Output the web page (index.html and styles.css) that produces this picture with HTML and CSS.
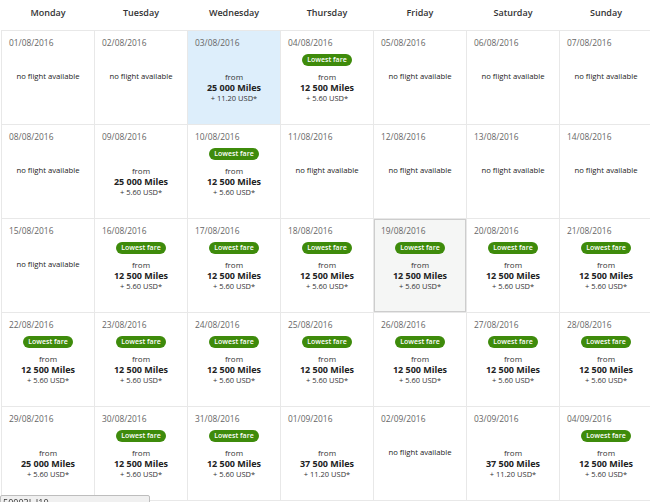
FILE: index.html
```html
<!DOCTYPE html>
<html>
<head>
<meta charset="utf-8">
<link rel="stylesheet" href="styles.css">
</head>
<body>
<div class="cal">
  <div class="days">
    <div class="day">Monday</div><div class="day">Tuesday</div><div class="day">Wednesday</div><div class="day">Thursday</div><div class="day">Friday</div><div class="day">Saturday</div><div class="day">Sunday</div>
  </div>
  <div class="grid">
    <!-- row 1 -->
    <div class="cell"><div class="date">01/08/2016</div><div class="badge-slot"></div><div class="none">no flight available</div></div>
    <div class="cell"><div class="date">02/08/2016</div><div class="badge-slot"></div><div class="none">no flight available</div></div>
    <div class="cell selected"><div class="date">03/08/2016</div><div class="badge-slot"></div><div class="from">from</div><div class="miles">25 000 Miles</div><div class="usd">+ 11.20 USD*</div></div>
    <div class="cell"><div class="date">04/08/2016</div><div class="badge-slot"><span class="badge">Lowest fare</span></div><div class="from">from</div><div class="miles">12 500 Miles</div><div class="usd">+ 5.60 USD*</div></div>
    <div class="cell"><div class="date">05/08/2016</div><div class="badge-slot"></div><div class="none">no flight available</div></div>
    <div class="cell"><div class="date">06/08/2016</div><div class="badge-slot"></div><div class="none">no flight available</div></div>
    <div class="cell"><div class="date">07/08/2016</div><div class="badge-slot"></div><div class="none">no flight available</div></div>
    <!-- row 2 -->
    <div class="cell"><div class="date">08/08/2016</div><div class="badge-slot"></div><div class="none">no flight available</div></div>
    <div class="cell"><div class="date">09/08/2016</div><div class="badge-slot"></div><div class="from">from</div><div class="miles">25 000 Miles</div><div class="usd">+ 5.60 USD*</div></div>
    <div class="cell"><div class="date">10/08/2016</div><div class="badge-slot"><span class="badge">Lowest fare</span></div><div class="from">from</div><div class="miles">12 500 Miles</div><div class="usd">+ 5.60 USD*</div></div>
    <div class="cell"><div class="date">11/08/2016</div><div class="badge-slot"></div><div class="none">no flight available</div></div>
    <div class="cell"><div class="date">12/08/2016</div><div class="badge-slot"></div><div class="none">no flight available</div></div>
    <div class="cell"><div class="date">13/08/2016</div><div class="badge-slot"></div><div class="none">no flight available</div></div>
    <div class="cell"><div class="date">14/08/2016</div><div class="badge-slot"></div><div class="none">no flight available</div></div>
    <!-- row 3 -->
    <div class="cell"><div class="date">15/08/2016</div><div class="badge-slot"></div><div class="none">no flight available</div></div>
    <div class="cell"><div class="date">16/08/2016</div><div class="badge-slot"><span class="badge">Lowest fare</span></div><div class="from">from</div><div class="miles">12 500 Miles</div><div class="usd">+ 5.60 USD*</div></div>
    <div class="cell"><div class="date">17/08/2016</div><div class="badge-slot"><span class="badge">Lowest fare</span></div><div class="from">from</div><div class="miles">12 500 Miles</div><div class="usd">+ 5.60 USD*</div></div>
    <div class="cell"><div class="date">18/08/2016</div><div class="badge-slot"><span class="badge">Lowest fare</span></div><div class="from">from</div><div class="miles">12 500 Miles</div><div class="usd">+ 5.60 USD*</div></div>
    <div class="cell hover"><div class="date">19/08/2016</div><div class="badge-slot"><span class="badge">Lowest fare</span></div><div class="from">from</div><div class="miles">12 500 Miles</div><div class="usd">+ 5.60 USD*</div></div>
    <div class="cell"><div class="date">20/08/2016</div><div class="badge-slot"><span class="badge">Lowest fare</span></div><div class="from">from</div><div class="miles">12 500 Miles</div><div class="usd">+ 5.60 USD*</div></div>
    <div class="cell"><div class="date">21/08/2016</div><div class="badge-slot"><span class="badge">Lowest fare</span></div><div class="from">from</div><div class="miles">12 500 Miles</div><div class="usd">+ 5.60 USD*</div></div>
    <!-- row 4 -->
    <div class="cell"><div class="date">22/08/2016</div><div class="badge-slot"><span class="badge">Lowest fare</span></div><div class="from">from</div><div class="miles">12 500 Miles</div><div class="usd">+ 5.60 USD*</div></div>
    <div class="cell"><div class="date">23/08/2016</div><div class="badge-slot"><span class="badge">Lowest fare</span></div><div class="from">from</div><div class="miles">12 500 Miles</div><div class="usd">+ 5.60 USD*</div></div>
    <div class="cell"><div class="date">24/08/2016</div><div class="badge-slot"><span class="badge">Lowest fare</span></div><div class="from">from</div><div class="miles">12 500 Miles</div><div class="usd">+ 5.60 USD*</div></div>
    <div class="cell"><div class="date">25/08/2016</div><div class="badge-slot"><span class="badge">Lowest fare</span></div><div class="from">from</div><div class="miles">12 500 Miles</div><div class="usd">+ 5.60 USD*</div></div>
    <div class="cell"><div class="date">26/08/2016</div><div class="badge-slot"><span class="badge">Lowest fare</span></div><div class="from">from</div><div class="miles">12 500 Miles</div><div class="usd">+ 5.60 USD*</div></div>
    <div class="cell"><div class="date">27/08/2016</div><div class="badge-slot"><span class="badge">Lowest fare</span></div><div class="from">from</div><div class="miles">12 500 Miles</div><div class="usd">+ 5.60 USD*</div></div>
    <div class="cell"><div class="date">28/08/2016</div><div class="badge-slot"><span class="badge">Lowest fare</span></div><div class="from">from</div><div class="miles">12 500 Miles</div><div class="usd">+ 5.60 USD*</div></div>
    <!-- row 5 -->
    <div class="cell"><div class="date">29/08/2016</div><div class="badge-slot"></div><div class="from">from</div><div class="miles">25 000 Miles</div><div class="usd">+ 5.60 USD*</div></div>
    <div class="cell"><div class="date">30/08/2016</div><div class="badge-slot"><span class="badge">Lowest fare</span></div><div class="from">from</div><div class="miles">12 500 Miles</div><div class="usd">+ 5.60 USD*</div></div>
    <div class="cell"><div class="date">31/08/2016</div><div class="badge-slot"><span class="badge">Lowest fare</span></div><div class="from">from</div><div class="miles">12 500 Miles</div><div class="usd">+ 5.60 USD*</div></div>
    <div class="cell"><div class="date">01/09/2016</div><div class="badge-slot"></div><div class="from">from</div><div class="miles">37 500 Miles</div><div class="usd">+ 11.20 USD*</div></div>
    <div class="cell"><div class="date">02/09/2016</div><div class="badge-slot"></div><div class="none">no flight available</div></div>
    <div class="cell"><div class="date">03/09/2016</div><div class="badge-slot"></div><div class="from">from</div><div class="miles">37 500 Miles</div><div class="usd">+ 11.20 USD*</div></div>
    <div class="cell"><div class="date">04/09/2016</div><div class="badge-slot"><span class="badge">Lowest fare</span></div><div class="from">from</div><div class="miles">12 500 Miles</div><div class="usd">+ 5.60 USD*</div></div>
  </div>
</div>
<div class="status">50003L I10</div>
</body>
</html>
```
FILE: styles.css
```css
html, body {
  margin: 0;
  padding: 0;
  background: #fff;
  font-family: "Open Sans", "DejaVu Sans", sans-serif;
  color: #333;
  overflow: hidden;
}
.cal {
  width: 652px;
  margin-left: 1px;
}
.days {
  display: grid;
  grid-template-columns: repeat(7, 92px);
  column-gap: 1px;
  height: 30px;
  padding-left: 1px;
}
.day {
  text-align: center;
  font-size: 9px;
  font-weight: 600;
  line-height: 26px;
  color: #333;
}
.grid {
  display: grid;
  grid-template-columns: repeat(7, 92px);
  grid-auto-rows: 93px;
  gap: 1px;
  background: #e8e8e8;
  border: 1px solid #e8e8e8;
}
.cell {
  background: #fff;
  padding: 6px 7px 0;
  display: flex;
  flex-direction: column;
  align-items: center;
  text-align: center;
}
.cell.selected {
  background: #ddeefb;
}
.cell.hover {
  background: #f5f6f5;
  box-shadow: inset 0 0 0 1px #cdcdcd;
}
.date {
  align-self: flex-start;
  font-size: 8.4px;
  line-height: 12px;
  color: #666;
}
.badge-slot {
  margin-top: 5px;
  height: 12px;
  margin-bottom: 5px;
  display: flex;
  align-items: center;
}
.badge {
  display: inline-block;
  background: #3e8b0b;
  color: #fff;
  font-size: 7px;
  font-weight: 600;
  line-height: 12px;
  height: 12px;
  padding: 0 5px;
  border-radius: 6px;
}
.from {
  font-size: 8px;
  line-height: 11px;
  color: #333;
}
.none {
  font-size: 7.7px;
  line-height: 11px;
  color: #222;
}
.miles {
  font-size: 9px;
  font-weight: 700;
  line-height: 11px;
  color: #222;
}
.usd {
  font-size: 7.5px;
  line-height: 11px;
  color: #333;
}
.status {
  position: fixed;
  left: 0;
  bottom: -6px;
  width: 146px;
  height: 11px;
  background: #f0f0f0;
  border: 1px solid #bdbdbd;
  border-radius: 2px;
  font-size: 9px;
  line-height: 13px;
  padding-left: 2px;
  color: #333;
}
```
